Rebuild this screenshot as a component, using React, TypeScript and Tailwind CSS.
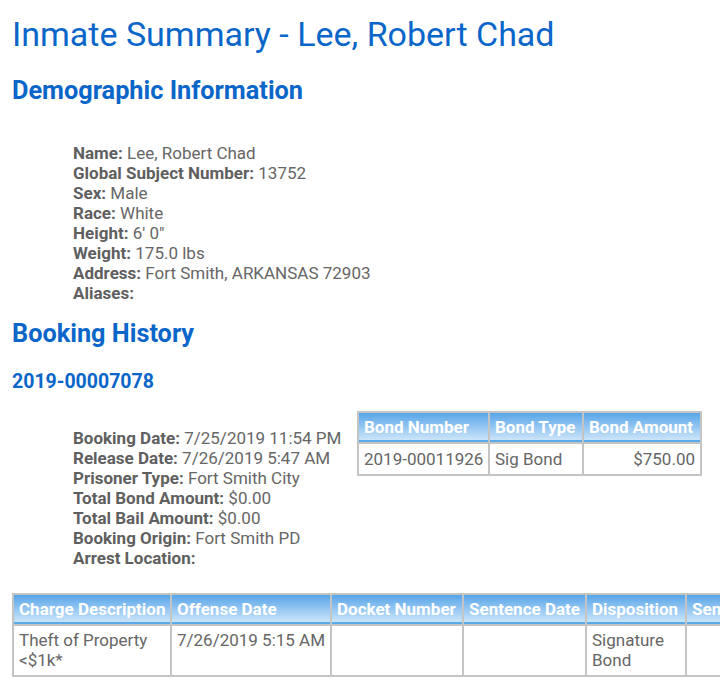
const demographics: [string, string][] = [
  ["Name:", "Lee, Robert Chad"],
  ["Global Subject Number:", "13752"],
  ["Sex:", "Male"],
  ["Race:", "White"],
  ["Height:", "6' 0\""],
  ["Weight:", "175.0 lbs"],
  ["Address:", "Fort Smith, ARKANSAS 72903"],
  ["Aliases:", ""],
];

const booking: [string, string][] = [
  ["Booking Date:", "7/25/2019 11:54 PM"],
  ["Release Date:", "7/26/2019 5:47 AM"],
  ["Prisoner Type:", "Fort Smith City"],
  ["Total Bond Amount:", "$0.00"],
  ["Total Bail Amount:", "$0.00"],
  ["Booking Origin:", "Fort Smith PD"],
  ["Arrest Location:", ""],
];

const th =
  "border-2 border-[#c4c4c4] bg-gradient-to-b from-[#56a5e8] to-[#d3e9fa] px-[5px] pt-[4px] pb-[5px] text-left text-[17px] leading-[20px] font-bold whitespace-nowrap overflow-hidden text-white shadow-[inset_0_-2px_0_#5aa9ea]";
const td = "border-2 border-[#c4c4c4] px-[5px] align-top text-[17px] leading-[20px] text-[#666]";

function InfoList({ rows }: { rows: [string, string][] }) {
  return (
    <div className="pl-[61px] text-[17px] leading-[20px] text-[#666]">
      {rows.map(([label, value]) => (
        <div key={label} className="whitespace-nowrap">
          <span className="font-bold text-[#5f5f5f]">{label}</span>
          {value ? ` ${value}` : ""}
        </div>
      ))}
    </div>
  );
}

export default function App() {
  return (
    <div className="min-h-screen overflow-hidden bg-white px-[12px] pt-[14px] font-['Roboto',sans-serif]">
      <h1 className="text-[34px] leading-[40px] text-[#0a66c8]">
        Inmate Summary - Lee, Robert Chad
      </h1>
      <h2 className="mt-[22px] text-[25.3px] leading-[30px] font-bold text-[#0a66c8]">
        Demographic Information
      </h2>
      <div className="mt-[37px]">
        <InfoList rows={demographics} />
      </div>
      <h2 className="mt-[16px] text-[25.3px] leading-[30px] font-bold text-[#0a66c8]">
        Booking History
      </h2>
      <h3 className="mt-[22px] text-[19.5px] leading-[22px] font-bold text-[#0a66c8]">
        2019-00007078
      </h3>
      <div className="mt-[18px] flex items-start">
        <div className="mt-[17px] w-[345px]">
          <InfoList rows={booking} />
        </div>
        <table className="w-[343px] table-fixed border-collapse border-2 border-[#c4c4c4]">
          <thead>
            <tr>
              <th className={`${th} w-[131px]`}>Bond Number</th>
              <th className={`${th} w-[94px]`}>Bond Type</th>
              <th className={`${th} w-[118px]`}>Bond Amount</th>
            </tr>
          </thead>
          <tbody>
            <tr>
              <td className={`${td} py-[5px] whitespace-nowrap`}>2019-00011926</td>
              <td className={`${td} py-[5px] whitespace-nowrap`}>Sig Bond</td>
              <td className={`${td} py-[5px] text-right whitespace-nowrap`}>$750.00</td>
            </tr>
          </tbody>
        </table>
      </div>
      <table className="mt-[25px] w-[853px] table-fixed border-collapse border-2 border-[#c4c4c4]">
        <thead>
          <tr>
            <th className={`${th} w-[158px]`}>Charge Description</th>
            <th className={`${th} w-[160px]`}>Offense Date</th>
            <th className={`${th} w-[132px]`}>Docket Number</th>
            <th className={`${th} w-[123px]`}>Sentence Date</th>
            <th className={`${th} w-[100px]`}>Disposition</th>
            <th className={`${th} w-[180px]`}>Sentence</th>
          </tr>
        </thead>
        <tbody>
          <tr>
            <td className={`${td} h-[51px] py-[4px]`}>Theft of Property &lt;$1k*</td>
            <td className={`${td} py-[4px] whitespace-nowrap`}>7/26/2019 5:15 AM</td>
            <td className={td}></td>
            <td className={td}></td>
            <td className={`${td} py-[4px]`}>Signature Bond</td>
            <td className={td}></td>
          </tr>
        </tbody>
      </table>
    </div>
  );
}
